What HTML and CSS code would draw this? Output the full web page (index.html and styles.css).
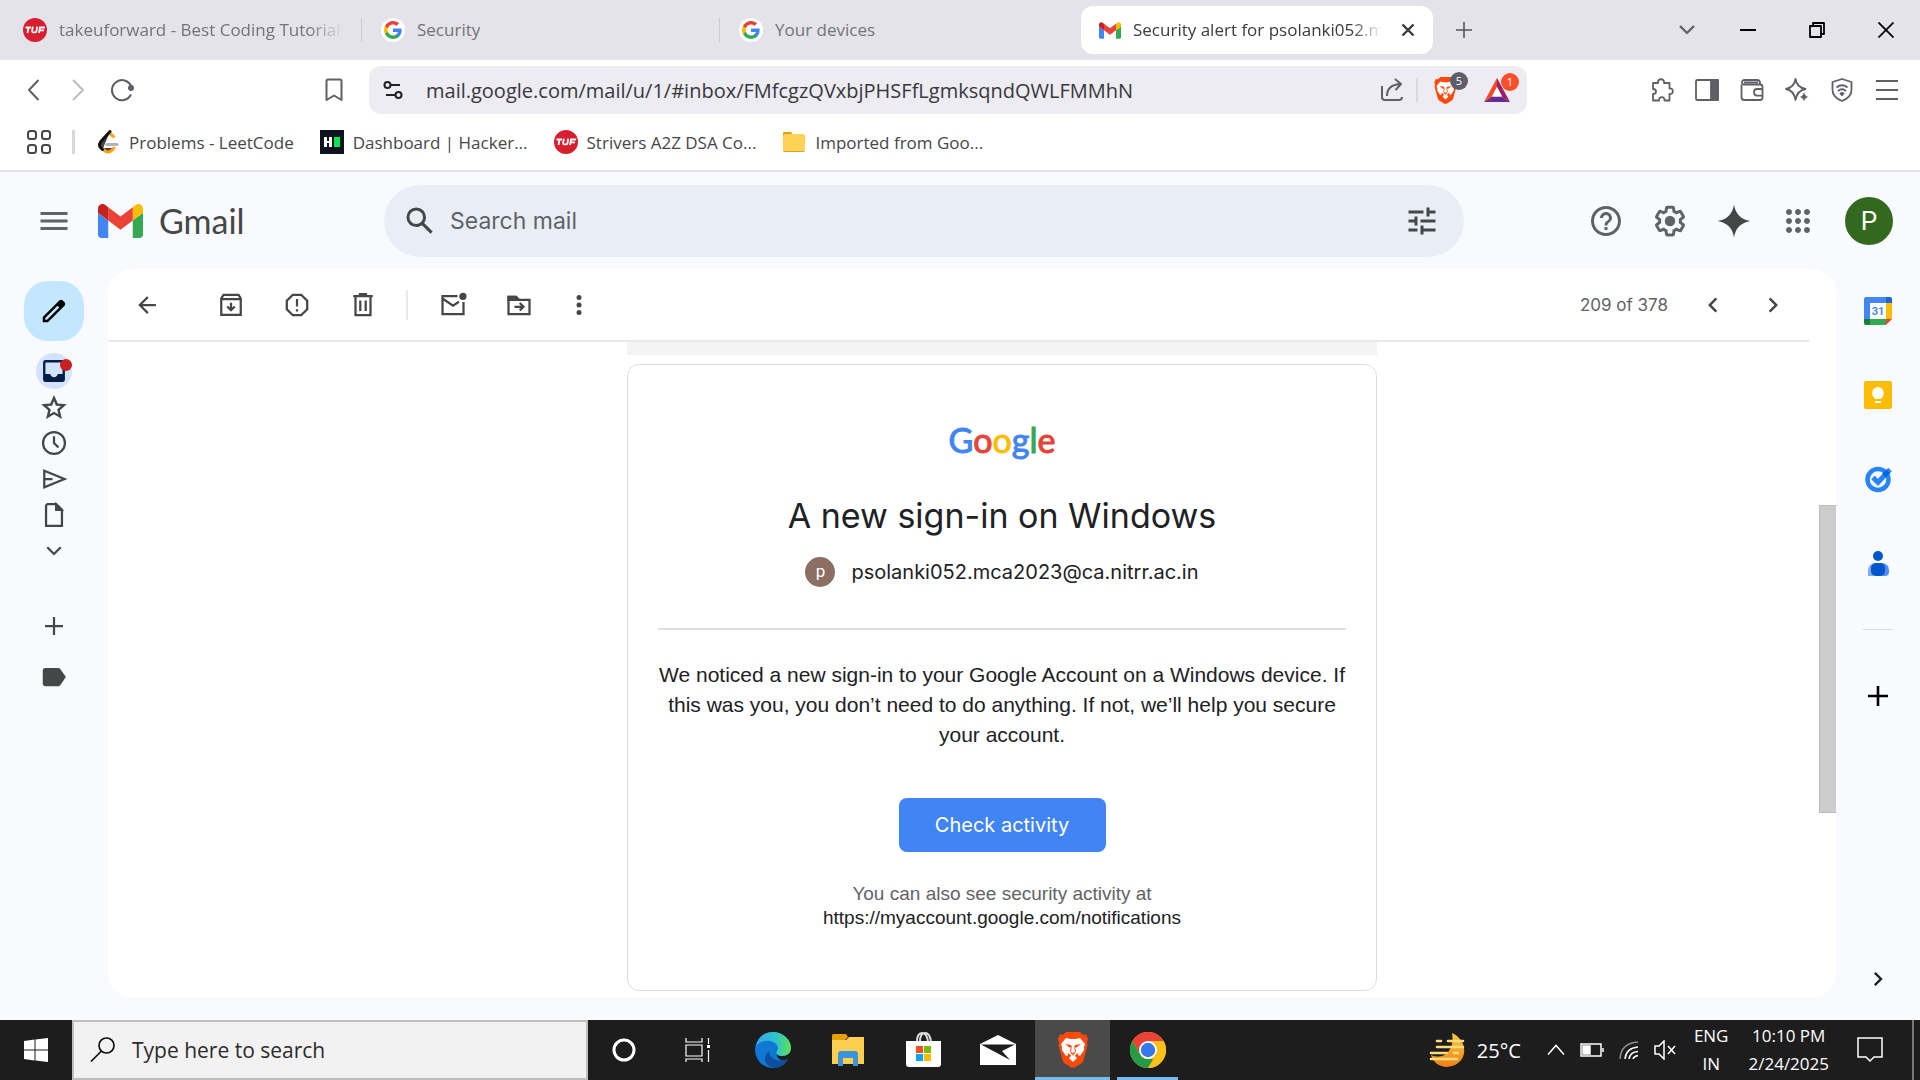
FILE: index.html
```html
<!DOCTYPE html>
<html lang="en">
<head>
<meta charset="utf-8">
<title>Security alert - Gmail</title>
<link rel="stylesheet" href="styles.css">
</head>
<body>
<svg class="defs" aria-hidden="true">
  <defs>
    <symbol id="g" viewBox="0 0 24 24"><circle cx="12" cy="12" r="12" fill="#fff"/><g transform="translate(3 3) scale(.75)"><path fill="#4285f4" d="M23.5 12.3c0-.8-.1-1.6-.2-2.3H12v4.5h6.500c-.3 1.500-1.100 2.700-2.400 3.600v3h3.900c2.200-2.100 3.500-5.200 3.500-8.800z"/><path fill="#34a853" d="M12 24c3.200 0 6-1.100 8-2.900l-3.900-3c-1.100.7-2.400 1.200-4.100 1.200-3.100 0-5.800-2.100-6.700-5H1.300v3.100C3.300 21.300 7.300 24 12 24z"/><path fill="#fbbc05" d="M5.300 14.300c-.2-.7-.4-1.500-.4-2.300s.1-1.600.4-2.300V6.600h-4C.5 8.200 0 10 0 12s.5 3.800 1.300 5.400z"/><path fill="#ea4335" d="M12 4.800c1.800 0 3.300.6 4.600 1.800L20 3.100C18 1.200 15.200 0 12 0 7.300 0 3.300 2.700 1.300 6.600l4 3.100c.9-2.900 3.600-4.900 6.700-4.900z"/></g></symbol>
    <symbol id="gm" viewBox="52 42 88 66"><path fill="#4285f4" d="M58 108h14V74L52 59v43c0 3.320 2.690 6 6 6"/><path fill="#34a853" d="M120 108h14c3.320 0 6-2.690 6-6V59l-20 15"/><path fill="#fbbc04" d="M120 48v26l20-15v-8c0-7.420-8.470-11.650-14.400-7.200"/><path fill="#ea4335" d="M72 74V48l24 18 24-18v26L96 92"/><path fill="#c5221f" d="M52 51v8l20 15V48l-5.600-4.200c-5.940-4.450-14.400-.22-14.400 7.200"/></symbol>
    <symbol id="brave" viewBox="0 0 30 36"><path fill="#fb4a0c" d="M8 0h14l3 3 3-.5L30 7l-1 3 .5 3-4 15c-.5 2-1.500 3-3 4l-6 3.500h-3L7.500 32c-1.500-1-2.500-2-3-4L.5 13 1 10 0 7l2-4.500L5 3z"/><path fill="#fff" d="M8 6l4 1h6l4-1 5 6-1 3 0 3-4 6-4-2-1 2 2 2-4 4-4-4 2-2-1-2-4 2-4-6 0-3-1-3z"/><path fill="#fb4a0c" d="M7 12l6 1 .8 2-.8 5 2 1 2-1-.8-5 .8-2 6-1-4.500 3.500h-1.500l1 3.500-1 2.500-1.500 1-.5 2-.5-2-1.500-1-1-2.500 1-3.500h-1.500zM9 21l3 1-1 1.500zM21 21l-3 1 1 1.500z"/></symbol>
    <symbol id="tuf" viewBox="0 0 24 24"><circle cx="12" cy="12" r="12" fill="#d71f30"/><g fill="none" stroke="#fff" stroke-width="1.800"><path d="M2.500 9.500h5.500M5.500 9.500l-1 5.500M9.800 8.600l-.7 4.500q0 1.200 1 1.200h2q1.200 0 1.400-1.200l.6-4.500M16 15l1-5.500h5M16.500 12.300h4.500"/></g></symbol>
    <symbol id="puzzle" viewBox="0 0 24 24"><path d="M3 5h5c-1-5 7-5 6 0h5.500v5.500c4.500-.5 4.500 6 0 5.500v6.500H14.500c.5-4.500-6-4.500-5.500 0H3V16c4 0 4-5 0-5z"/></symbol>
  </defs>
</svg>

<div class="tabstrip">
  <button class="tab"><svg class="fav"><use href="#tuf"/></svg><span class="fade">takeuforward - Best Coding Tutorials</span></button>
  <button class="tab"><svg class="fav"><use href="#g"/></svg><span>Security</span></button>
  <button class="tab plain"><svg class="fav"><use href="#g"/></svg><span>Your devices</span></button>
  <div class="tab active"><svg class="fav gm"><use href="#gm"/></svg><span class="fade">Security alert for psolanki052.mca2023</span><button class="x" aria-label="Close tab"><svg class="line" width="14" height="14" viewBox="0 0 14 14"><path d="M1.500 1.500l11 11M12.500 1.500l-11 11" stroke-width="2.400"/></svg></button></div>
  <button class="newtab" aria-label="New tab"><svg class="line" width="16" height="16" viewBox="0 0 16 16"><path d="M8 0v16M0 8h16" stroke-width="1.600"/></svg></button>
  <div class="wincontrols">
    <button class="search-tabs" aria-label="Search tabs"><svg class="line" width="16" height="10" viewBox="0 0 16 10"><path d="M1 1l7 7 7-7" stroke-width="2.400"/></svg></button>
    <button aria-label="Minimize"><svg class="line" width="16" height="16" viewBox="0 0 16 16"><path d="M0 8h16" stroke-width="2"/></svg></button>
    <button aria-label="Restore"><svg class="line" width="16" height="16" viewBox="0 0 16 16"><path d="M1 4h11v11H1zM4 4V1h11v11h-3" stroke-width="1.800"/></svg></button>
    <button aria-label="Close window"><svg class="line" width="16" height="16" viewBox="0 0 16 16"><path d="M.5.5l15 15M15.500.5l-15 15" stroke-width="1.800"/></svg></button>
  </div>
</div>

<div class="browserbar">
  <div class="nav">
    <button aria-label="Back"><svg class="line" width="24" height="24" viewBox="0 0 24 24"><path d="M16.500 2L7 12l9.500 10"/></svg></button>
    <button class="dim" aria-label="Forward"><svg class="line" width="24" height="24" viewBox="0 0 24 24"><path d="M7 2l10 10L7 22"/></svg></button>
    <button aria-label="Reload"><svg class="line" width="24" height="24" viewBox="0 0 24 24"><path d="M21 16.500A10 10 0 1 1 21.500 9"/><circle cx="21" cy="10" r="2" class="solid"/></svg></button>
    <button class="mark" aria-label="Bookmark"><svg class="line" width="24" height="24" viewBox="0 0 24 24"><path d="M4.500 3Q4.500 1.500 6 1.500h12q1.500 0 1.500 1.500v19L12 17.500 4.500 22z"/></svg></button>
  </div>
  <div class="address">
    <svg class="line dark" width="20" height="20" viewBox="0 0 20 20"><circle cx="4.500" cy="5" r="3"/><path d="M8 5h9M3 15h9"/><circle cx="15.500" cy="15" r="3"/></svg>
    <input type="text" aria-label="Address" value="mail.google.com/mail/u/1/#inbox/FMfcgzQVxbjPHSFfLgmksqndQWLFMMhN">
    <button aria-label="Share"><svg class="line" width="24" height="24" viewBox="0 0 24 24"><path d="M2 8v11q0 3 3 3h14q3 0 3-3M7 18q0-11 13-12M15 1l6 5-5.500 6"/></svg></button>
    <i class="vsep"></i>
    <button class="badged" aria-label="Brave Shields"><svg width="23" height="27"><use href="#brave"/></svg><b>5</b></button>
    <button class="badged red" aria-label="Brave Rewards"><svg width="26" height="24" viewBox="0 0 26 24"><path fill="#ff4724" d="M13 0L0 24l8-5.500L13 9z"/><path fill="#9e1f63" d="M13 0v9l5 9.500 8 5.500z"/><path fill="#662d91" d="M0 24l8-5.500h10l8 5.500z"/><path fill="#fff" d="M13 9l5 9.500H8z"/></svg><b>1</b></button>
  </div>
  <div class="exts">
    <button aria-label="Extensions"><svg class="line"><use href="#puzzle"/></svg></button>
    <button aria-label="Sidebar"><svg class="line" viewBox="0 0 24 24"><rect x="1" y="2" width="22" height="20" rx="1.500"/><path class="solid" d="M16 2h7v20h-7z"/></svg></button>
    <button aria-label="Wallet"><svg class="line" viewBox="0 0 24 24"><path d="M1.500 6.500V19q0 3 3 3H20q2.500 0 2.500-2.500V9q0-2.500-2.500-2.500H3.500Q1 5 2.500 3q.8-1 2-1H17q3 0 3 3v1.500M22.500 11H17q-3 0-3 3.300t3 3.300h5.500M4 4.300h14"/></svg></button>
    <button aria-label="Leo"><svg class="line" viewBox="0 0 24 24"><path d="M10.500 1q1.200 8.300 10 10-8.800 1.700-10 11-1.200-9.300-9.500-11Q9.300 9.300 10.500 1z"/><path class="solid knock" d="M19 14q.8 4.200 4.500 5-3.700.8-4.500 4.500-.8-3.700-4.500-4.500 3.700-.8 4.500-5z"/></svg></button>
    <button aria-label="VPN"><svg class="line" viewBox="0 0 24 24"><path d="M12 1l9.500 3v8q0 7-9.500 11Q2.500 19 2.500 12V4zM6.500 9.500q5.500-4.500 11 0M8 13q4-3.500 8 0"/><path class="solid" d="M10.500 15.500q1.500-1 3 0L12 17z"/></svg></button>
    <button aria-label="Menu"><svg class="line" viewBox="0 0 24 24"><path d="M1 3h22M1 12h22M1 21h22"/></svg></button>
  </div>
</div>

<nav class="bookmarks">
  <button aria-label="Apps"><svg class="line" viewBox="0 0 24 24"><rect x="1" y="1" width="8" height="8" rx="2.500"/><rect x="15" y="1" width="8" height="8" rx="2.500"/><rect x="1" y="15" width="8" height="8" rx="2.500"/><rect x="15" y="15" width="8" height="8" rx="2.500"/></svg></button>
  <i class="vsep"></i>
  <a href="#"><svg viewBox="0 0 24 24" fill="none" stroke-width="3" stroke-linecap="round"><path stroke="#ffa116" d="M17.500 6.500L14 3.500M18 18l-3 3q-3 2-6 0l-3-3"/><path stroke="#b3b3b3" d="M11 14.500h10"/><path stroke="#111" d="M14 1.500L4.500 12q-2 3 0 5.500l2 2"/></svg>Problems - LeetCode</a>
  <a href="#"><svg viewBox="0 0 24 24"><path fill="#0e141e" d="M0 0h24v24H0z"/><path fill="#fff" d="M4 7h3v4h2V7h3v10H9v-4H7v4H4z"/><path fill="#00e550" d="M14 7h6v10h-6z"/></svg>Dashboard | Hacker...</a>
  <a href="#"><svg><use href="#tuf"/></svg>Strivers A2Z DSA Co...</a>
  <a href="#"><svg viewBox="0 0 24 24"><path fill="#e0a015" d="M1 3q0-1 1-1h7l2 3v5H1z"/><rect x="1" y="4" width="22" height="17" rx="2" fill="#fed355"/><path fill="#d5a02b" d="M1 19q0 2 2 2h18q2 0 2-2v1q0 2-2 2H3q-2 0-2-2z"/></svg>Imported from Goo...</a>
</nav>

<div class="gmail">
  <header class="ghead">
    <div class="brand">
      <button class="ico" aria-label="Main menu"><svg width="36" height="36" viewBox="0 0 24 24"><path d="M3 18h18v-2H3v2zm0-5h18v-2H3v2zm0-7v2h18V6H3z"/></svg></button>
      <a href="#"><svg width="45" height="34"><use href="#gm"/></svg><span>Gmail</span></a>
    </div>
    <form class="search">
      <button type="button" class="ico" aria-label="Search"><svg width="36" height="36" viewBox="0 0 24 24"><path d="M20.490 19l-5.730-5.730C15.530 12.200 16 10.910 16 9.500A6.500 6.500 0 1 0 9.500 16c1.410 0 2.700-.47 3.770-1.240L19 20.490 20.490 19zM5 9.500C5 7.010 7.010 5 9.500 5S14 7.010 14 9.500 11.990 14 9.500 14 5 11.990 5 9.500z"/></svg></button>
      <input type="text" placeholder="Search mail" aria-label="Search mail">
      <button type="button" class="ico" aria-label="Search options"><svg width="36" height="36" viewBox="0 0 24 24"><path d="M3 17v2h6v-2H3zM3 5v2h10V5H3zm10 16v-2h8v-2h-8v-2h-2v6h2zM7 9v2H3v2h4v2h2V9H7zm14 4v-2H11v2h10zm-6-4h2V7h4V5h-4V3h-2v6z"/></svg></button>
    </form>
    <div class="account">
      <button class="ico" aria-label="Support"><svg width="36" height="36" viewBox="0 0 24 24"><path d="M11 18h2v-2h-2v2zm1-16C6.480 2 2 6.480 2 12s4.480 10 10 10 10-4.480 10-10S17.520 2 12 2zm0 18c-4.410 0-8-3.590-8-8s3.590-8 8-8 8 3.590 8 8-3.590 8-8 8zm0-14c-2.210 0-4 1.790-4 4h2c0-1.100.9-2 2-2s2 .9 2 2c0 2-3 1.750-3 5h2c0-2.250 3-2.500 3-5 0-2.210-1.790-4-4-4z"/></svg></button>
      <button class="ico" aria-label="Settings"><svg width="36" height="36" viewBox="0 0 24 24"><path d="M13.850 22.250h-3.700c-.74 0-1.360-.54-1.450-1.270l-.27-1.890c-.27-.14-.53-.29-.79-.46l-1.800.72c-.7.26-1.470-.03-1.810-.65L2.200 15.530c-.35-.66-.2-1.440.36-1.880l1.530-1.190c-.01-.15-.02-.3-.02-.46 0-.15.01-.31.02-.46l-1.520-1.190c-.59-.45-.74-1.260-.37-1.880l1.850-3.190c.34-.62 1.110-.9 1.790-.63l1.810.73c.26-.17.52-.32.78-.46l.27-1.910c.09-.7.710-1.250 1.440-1.250h3.700c.74 0 1.360.54 1.450 1.270l.27 1.890c.27.14.53.29.79.46l1.800-.72c.71-.26 1.480.03 1.820.65l1.840 3.180c.36.66.2 1.440-.36 1.880l-1.520 1.190c.01.15.02.3.02.46s-.01.31-.02.46l1.520 1.190c.56.45.72 1.230.37 1.860l-1.860 3.220c-.34.62-1.110.9-1.800.63l-1.800-.72c-.26.17-.52.32-.78.46l-.27 1.910c-.1.68-.72 1.220-1.460 1.220zm-3.230-2h2.760l.37-2.550.53-.22c.44-.18.88-.44 1.340-.78l.45-.34 2.380.96 1.380-2.400-2.030-1.580.07-.56c.03-.26.06-.51.06-.78s-.03-.53-.06-.78l-.07-.56 2.030-1.580-1.390-2.400-2.390.96-.45-.35c-.42-.32-.87-.58-1.330-.77l-.52-.22-.37-2.550h-2.760l-.37 2.550-.53.21c-.44.19-.88.44-1.340.79l-.45.33-2.380-.95-1.390 2.390 2.030 1.580-.07.560a7 7 0 0 0-.06.79c0 .26.02.53.06.78l.07.56-2.030 1.580 1.380 2.400 2.390-.96.45.35c.43.33.86.58 1.330.77l.53.22.38 2.550z"/><circle cx="12" cy="12" r="3.500"/></svg></button>
      <button class="ico gemini" aria-label="Gemini"><svg width="36" height="36" viewBox="0 0 24 24"><path d="M12 1q1.500 9.500 11 11-9.500 1.500-11 11-1.500-9.500-11-11 9.500-1.500 11-11z"/></svg></button>
      <button class="ico" aria-label="Google apps"><svg width="36" height="36" viewBox="0 0 24 24"><path d="M6,8c1.100,0 2,-0.900 2,-2s-0.900,-2 -2,-2 -2,0.900 -2,2 0.900,2 2,2zM12,20c1.100,0 2,-0.900 2,-2s-0.900,-2 -2,-2 -2,0.900 -2,2 0.900,2 2,2zM6,20c1.100,0 2,-0.900 2,-2s-0.900,-2 -2,-2 -2,0.900 -2,2 0.900,2 2,2zM6,14c1.100,0 2,-0.900 2,-2s-0.900,-2 -2,-2 -2,0.900 -2,2 0.900,2 2,2zM12,14c1.100,0 2,-0.900 2,-2s-0.900,-2 -2,-2 -2,0.900 -2,2 0.900,2 2,2zM16,6c0,1.100 0.900,2 2,2s2,-0.900 2,-2 -0.900,-2 -2,-2 -2,0.900 -2,2zM12,8c1.100,0 2,-0.900 2,-2s-0.900,-2 -2,-2 -2,0.900 -2,2 0.900,2 2,2zM18,14c1.100,0 2,-0.900 2,-2s-0.900,-2 -2,-2 -2,0.900 -2,2 0.900,2 2,2zM18,20c1.100,0 2,-0.900 2,-2s-0.900,-2 -2,-2 -2,0.900 -2,2 0.900,2 2,2z"/></svg></button>
      <button class="avatar" aria-label="Account">P</button>
    </div>
  </header>

  <div class="gbody">
    <nav class="rail">
      <button class="compose" aria-label="Compose"><svg width="36" height="36" viewBox="0 0 24 24"><path d="M20.410 4.940l-1.350-1.350c-.78-.78-2.050-.78-2.830 0L3 16.820V21h4.180L20.410 7.770c.79-.78.79-2.050 0-2.830zM6.410 19.060L5 19v-1.360l9.820-9.820 1.410 1.410-9.820 9.830z"/></svg></button>
      <a href="#" class="inbox" aria-label="Inbox"><svg viewBox="0 0 20 20"><path d="M4.500 3h11c.83 0 1.500.67 1.500 1.500v11c0 .83-.67 1.500-1.500 1.500h-11c-.83 0-1.500-.67-1.500-1.500v-11C3 3.670 3.670 3 4.500 3zm0 1.500V12H7.500c.4 1.200 1.300 2 2.500 2s2.100-.8 2.500-2h3V4.500h-11z" transform="translate(-2 -2) scale(1.200)"/></svg><i></i></a>
      <a href="#" aria-label="Starred"><svg viewBox="0 -1 20 20"><path d="M7.100 13.900l2.900-1.800 2.900 1.800-.8-3.300 2.600-2.200-3.400-.3L10 5l-1.300 3.100-3.400.3 2.600 2.200-.8 3.300zM4.700 17l1.400-5.900L1.500 7.100l6-.5L10 1l2.500 5.600 6 .5-4.600 4L15.300 17 10 13.900z"/></svg></a>
      <a href="#" aria-label="Snoozed"><svg class="stroke" viewBox="0 0 20 20"><circle cx="10" cy="10" r="7.300"/><path d="M10 5.500V10l3 3"/></svg></a>
      <a href="#" aria-label="Sent"><svg class="stroke" viewBox="0 0 20 20"><path d="M3.500 4.500L17 10 3.500 15.500zM4 10h5"/></svg></a>
      <a href="#" aria-label="Drafts"><svg class="stroke" viewBox="0 0 20 20"><path d="M5.700 2.700h5.800l3.800 3.800v10.800H4.700V3.700zM11.500 3v3.500H15"/><path class="solid" d="M11.500 3v3.500H15z"/></svg></a>
      <a href="#" aria-label="More"><svg class="stroke" viewBox="0 0 20 20"><path d="M5.500 7.500L10 12l4.500-4.500"/></svg></a>
      <button class="add" aria-label="Create label"><svg class="stroke" viewBox="0 0 20 20"><path d="M10 4v12M4 10h12"/></svg></button>
      <a href="#" class="label" aria-label="Labels"><svg viewBox="0 0 24 24"><path d="M17 5.500c-.4-.5-1-.8-1.600-.8H5A2 2 0 0 0 3 6.700v10.600c0 1.100.9 2 2 2h10.400c.6 0 1.200-.3 1.600-.8L21.500 12z"/></svg></a>
    </nav>

    <main class="pane">
      <div class="tools">
        <button class="back" aria-label="Back to inbox"><svg viewBox="0 0 24 24"><path d="M20 11H7.830l5.590-5.590L12 4l-8 8 8 8 1.410-1.410L7.830 13H20v-2z" transform="translate(1.500 1.500) scale(.88)"/></svg></button>
        <button aria-label="Archive"><svg class="stroke" viewBox="0 0 20 20"><path d="M3.500 5.500v11h13v-11L15 3.300H5zM3.500 6h13M10 8.500V13M7.500 11l2.500 2.500 2.500-2.500"/></svg></button>
        <button aria-label="Report spam"><svg class="stroke" viewBox="0 0 20 20"><path d="M7.200 3.200h5.600l4 4v5.600l-4 4H7.200l-4-4V7.200zM10 6v5M10 12.800v1.500"/></svg></button>
        <button aria-label="Delete"><svg class="stroke" viewBox="0 0 20 20"><path d="M3.500 4h13M8 4V2.800h4V4M5 4v12.700h10V4M8.200 7v7M11.800 7v7"/></svg></button>
        <i class="vsep"></i>
        <button aria-label="Mark as unread"><svg class="stroke" viewBox="0 0 20 20"><path d="M13 4H3v12h14V8M3.500 6l6.500 4.500 4-2.700"/><circle class="solid" cx="16.600" cy="4.200" r="1.700"/></svg></button>
        <button aria-label="Move to"><svg class="stroke" viewBox="0 0 20 20"><path d="M3 4.500V16h14V6.500H9.800L8 4.500zM7 11.200h5.500M10.500 8.700l2.500 2.500-2.500 2.500"/><path class="solid" d="M3 4.500h5l2 2H3z"/></svg></button>
        <button class="more" aria-label="More"><svg viewBox="0 0 24 24"><circle cx="12" cy="6" r="2"/><circle cx="12" cy="12" r="2"/><circle cx="12" cy="18" r="2"/></svg></button>
        <span class="count">209 of 378</span>
        <button class="page" aria-label="Newer"><svg viewBox="0 0 24 24"><path d="M15.400 7.400L14 6l-6 6 6 6 1.400-1.400L10.800 12z"/></svg></button>
        <button class="page" aria-label="Older"><svg viewBox="0 0 24 24"><path d="M10 6L8.600 7.400l4.600 4.600-4.600 4.600L10 18l6-6z"/></svg></button>
      </div>
      <div class="thread">
        <div class="strip"></div>
        <article class="card">
          <div class="glogo" aria-label="Google"><span class="b">G</span><span class="r">o</span><span class="y">o</span><span class="b">g</span><span class="n">l</span><span class="r">e</span></div>
          <h1>A new sign-in on Windows</h1>
          <div class="who"><span>p</span>psolanki052.mca2023@ca.nitrr.ac.in</div>
          <p>We noticed a new sign-in to your Google Account on a Windows device. If this was you, you don’t need to do anything. If not, we’ll help you secure your account.</p>
          <a href="#" class="check">Check activity</a>
          <div class="also">You can also see security activity at<br><a href="#">https://myaccount.google.com/notifications</a></div>
        </article>
        <div class="thumb"></div>
      </div>
    </main>

    <aside class="side">
      <button aria-label="Calendar"><svg viewBox="0 0 28 28"><path fill="#4285f4" d="M2 0h20v6H6v16H0V2q0-2 2-2z"/><path fill="#1967d2" d="M22 0h4q2 0 2 2v4h-6z"/><path fill="#fff" d="M6 6h16v16H6z"/><path fill="#fbbc04" d="M22 6h6v16h-6z"/><path fill="#34a853" d="M6 22h16v6H6z"/><path fill="#188038" d="M0 22h6v6H2q-2 0-2-2z"/><path fill="#ea4335" d="M22 22h6l-6 6z"/><text x="14" y="18" text-anchor="middle" class="day">31</text></svg></button>
      <button aria-label="Keep"><svg viewBox="0 0 28 28"><rect width="28" height="28" rx="2" fill="#fbbc04"/><path fill="#fff" d="M11 17.500C6.500 15 7.500 6 14 6s7.500 9 3 11.500V18h-6zM11 20h6v2h-6z"/></svg></button>
      <button aria-label="Tasks"><svg viewBox="0 0 28 28"><circle cx="14" cy="14.500" r="10.500" fill="none" stroke="#2684fc" stroke-width="4.500"/><path fill="none" stroke="#2684fc" stroke-width="5" d="M9 12.500l5 5L26 4.500"/><path stroke="#0066da" stroke-width="5" d="M20 10.500l4-4"/></svg></button>
      <button aria-label="Contacts"><svg viewBox="0 0 28 28"><circle cx="14" cy="7" r="5" fill="#0057cc"/><path fill="#7baaf7" d="M4 27v-5q0-7 7-8h6l-2 13z"/><path fill="#4f8df5" d="M11 14h7q7 1 7 7v2q0 4-4 4H11z"/><rect x="7" y="14" width="14" height="13" rx="5" fill="#0057cc"/></svg></button>
      <hr>
      <button class="plus" aria-label="Get add-ons"><svg viewBox="0 0 28 28"><path stroke="#000" stroke-width="2.600" d="M14 4v20M4 14h20"/></svg></button>
      <button class="hide" aria-label="Hide side panel"><svg viewBox="0 0 24 24"><path d="M10 6L8.600 7.400l4.600 4.600-4.600 4.600L10 18l6-6z"/></svg></button>
    </aside>
  </div>
</div>

<footer class="taskbar">
  <button class="start" aria-label="Start"><svg width="24" height="24" viewBox="0 0 24 24"><path fill="#fff" d="M0 3l10.500-1.400v10H0zM11.500 1.400L24 0v11.500H11.500zM0 12.500h10.500v10L0 21zM11.500 12.500H24V24l-12.500-1.500z"/></svg></button>
  <label class="find"><svg width="26" height="26" viewBox="0 0 26 26"><circle cx="16.500" cy="8.500" r="7.500" fill="none" stroke="#111" stroke-width="1.700"/><path stroke="#111" stroke-width="1.700" d="M11.500 14L1 24.500"/></svg><input type="text" placeholder="Type here to search" aria-label="Type here to search"></label>
  <button class="app cortana" aria-label="Cortana"><svg width="26" height="26" viewBox="0 0 26 26"><circle cx="13" cy="13" r="10" fill="none" stroke="#fff" stroke-width="3"/></svg></button>
  <button class="app" aria-label="Task view"><svg width="26" height="26" viewBox="0 0 26 26"><path fill="none" stroke="#fff" stroke-width="1.200" d="M1 1v4h16V1M1 8h16v11H1zM1 25v-3h16v3M23.500 1v6M23.500 13v12"/><path fill="#fff" d="M22 8h3v3h-3z"/></svg></button>
  <button class="app" aria-label="Edge"><svg width="36" height="36" viewBox="0 0 36 36"><defs><linearGradient id="e1" x1="0" x2="1"><stop offset="0" stop-color="#35a7ee"/><stop offset=".6" stop-color="#2fc5c6"/><stop offset="1" stop-color="#63e04d"/></linearGradient></defs><path fill="#0f78d4" d="M0 17C1 7 8 0 18 0s18 7 18 16c0 5-4 8-9 8s-7-3-5-5c-2 8 5 11 11 8-3 6-9 9-15 9C8 36 0 28 0 17z"/><path fill="#0d4f9e" d="M14 19c0 7 8 12 19 8-3 6-9 9-14 9-8-1-13-10-5-17z"/><path fill="url(#e1)" d="M1 14C3 5 9 0 18 0s18 7 18 16c0 5-4 8-9 8s-7-3-5-5c3-4-1-9-7-10C9 8 4 10 1 14z"/></svg></button>
  <button class="app" aria-label="File Explorer"><svg width="32" height="32" viewBox="0 0 32 32"><path fill="#e3a008" d="M0 1.500Q0 0 1.500 0H14l2 3-3 3H0z"/><path fill="#fdcf4e" d="M0 6h14l3-3h15v27H0z"/><path fill="#3a93dc" d="M6 32V20q0-3 3-3h14q3 0 3 3v12h-5v-8H11v8z"/></svg></button>
  <button class="app" aria-label="Microsoft Store"><svg width="36" height="36" viewBox="0 0 36 36"><path fill="none" stroke="#ddd" stroke-width="2" d="M12 10q0-9 5-9t6 9M15 10q0-9 5-9t6 9"/><path fill="#fff" d="M1 9h35v23q0 3-3 3H4q-3 0-3-3z"/><path fill="#f25022" d="M11 14h7v7h-7z"/><path fill="#7fba00" d="M19 14h7v7h-7z"/><path fill="#00a4ef" d="M11 22h7v7h-7z"/><path fill="#ffb900" d="M19 22h7v7h-7z"/></svg></button>
  <button class="app" aria-label="Mail"><svg width="36" height="30" viewBox="0 0 36 30"><path fill="#fff" d="M0 9L18 0l18 9v21H0z"/><path fill="#1d1d1d" d="M1 9.500h34l-13 6.500 8 9z"/></svg></button>
  <button class="app on" aria-label="Brave"><svg width="30" height="36"><use href="#brave"/></svg></button>
  <button class="app run" aria-label="Chrome"><svg width="36" height="36" viewBox="0 0 36 36"><circle cx="18" cy="18" r="18" fill="#fbc116"/><path fill="#ea4335" d="M2.400 9A18 18 0 0 1 33.600 9H18l-7.800 13.500z"/><path fill="#269a48" d="M2.400 9l7.800 13.500q3 5 7.800 4.500h7.800L18 36A18 18 0 0 1 2.400 9z"/><path fill="#fbc116" d="M18 9h15.600A18 18 0 0 1 18 36l7.800-13.500z"/><circle cx="18" cy="18" r="9" fill="#fff"/><circle cx="18" cy="18" r="7.200" fill="#3478eb"/></svg></button>
  <div class="tray">
    <svg width="36" height="34" viewBox="0 0 36 34"><defs><linearGradient id="mo" y2="1" x2="0"><stop offset="0" stop-color="#f9c840"/><stop offset="1" stop-color="#f08018"/></linearGradient></defs><path fill="url(#mo)" d="M23 0c18 8 16 33-5 34-8 0-14-5-16-12 14 6 24-6 21-22z"/><path stroke="#fbdc7c" stroke-width="2.600" stroke-linecap="round" d="M8 8h4M19 8h15M8 14h26M2 20h16M25 20h4M2 26h26"/></svg>
    <span class="temp">25°C</span>
    <svg class="line" width="18" height="12" viewBox="0 0 18 12"><path d="M1 10.500L9 1.500l8 9"/></svg>
    <svg class="line" width="24" height="14" viewBox="0 0 24 14"><path d="M1 1h20v12H1zM23 5v4"/><path fill="#fff" d="M3 3h7v8H3z"/></svg>
    <svg class="line" width="20" height="18" viewBox="0 0 20 18"><path opacity=".5" d="M1 18Q2 2 19 1"/><path d="M6 18Q7 7 19 6M10 18q1-7 9-7.500M14 18q1-3 5-3.500"/></svg>
    <svg class="line" width="22" height="20" viewBox="0 0 22 20"><path d="M1 6h4l5-5v18l-5-5H1zM14 6l7 8M21 6l-7 8"/></svg>
    <span class="two lang">ENG<br>IN</span>
    <span class="two clock">10:10 PM<br>2/24/2025</span>
    <svg class="line" width="26" height="26" viewBox="0 0 26 26"><path d="M1 1h24v19h-8l-4 4-4-4H1z"/></svg>
  </div>
</footer>
</body>
</html>
```
FILE: styles.css
```css
* { box-sizing: border-box; }
body {
  margin: 0;
  min-height: 100vh;
  display: flex;
  flex-direction: column;
  font-family: "Open Sans", "Noto Sans", sans-serif;
  font-size: 17px;
  color: #3b3b40;
  background: #fff;
}
.defs { position: absolute; width: 0; height: 0; }
button { border: 0; padding: 0; background: none; font: inherit; color: inherit; display: flex; align-items: center; justify-content: center; }
a { color: inherit; text-decoration: none; }
svg { display: block; flex: none; fill: currentColor; }
input { border: 0; background: none; padding: 0; min-width: 0; flex: 1; font: inherit; color: inherit; outline: 0; }
.line { fill: none; stroke: currentColor; stroke-width: 2; stroke-linejoin: round; }
.stroke { fill: none; stroke: currentColor; stroke-width: 1.5; }
.line .solid, .stroke .solid { fill: currentColor; }
.vsep { width: 2px; height: 24px; background: #d9d8de; flex: none; }

/* tab strip */
.tabstrip { height: 60px; background: #e4e3e9; display: flex; align-items: center; padding-left: 4px; }
.tab { flex: 0 1 358px; height: 24px; padding: 0 18px 0 19px; gap: 12px; justify-content: flex-start; border-right: 1px solid #cbcad0; color: #73737a; white-space: nowrap; min-width: 0; font-size: 17px; }
.tab.plain { border-color: transparent; }
.tab.active { display: flex; align-items: center; height: 48px; flex-basis: 352px; margin: 0 3px; padding-left: 18px; background: #fff; border: 0; border-radius: 12px; color: #3b3b40; }
.tab span { overflow: hidden; min-width: 0; line-height: 24px; }
.fade { flex: 1; -webkit-mask-image: linear-gradient(90deg, #000 88%, transparent); mask-image: linear-gradient(90deg, #000 88%, transparent); }
.fav { width: 24px; height: 24px; }
.fav.gm { width: 22px; height: 17px; }
.x { width: 14px; margin-left: 7px; }
.newtab { width: 56px; height: 48px; color: #55555b; }
.wincontrols { margin-left: auto; display: flex; height: 60px; color: #000; }
.wincontrols button { width: 69px; }
.wincontrols .search-tabs { width: 52px; color: #62626a; }

/* navigation row */
.browserbar { display: flex; align-items: center; height: 60px; color: #5f5f66; }
.nav { width: 369px; display: flex; padding-left: 12px; }
.nav button { width: 44px; }
.nav .dim { color: #bdbdc2; }
.nav .mark { margin-left: auto; width: 70px; }
.address { flex: 1; min-width: 0; height: 48px; border-radius: 12px; background: #edecf2; display: flex; align-items: center; padding: 0 8px 0 14px; font-size: 20px; }
.address input { margin-left: 23px; color: #38383e; }
.address .dark { color: #222; }
.address .vsep { margin: 0 16px 0 12px; }
.badged { position: relative; width: 34px; justify-content: flex-start; }
.badged.red { width: 35px; margin-left: 16px; }
.badged b { position: absolute; right: 0; top: -5px; width: 18px; height: 18px; border-radius: 9px; background: #5e5e6b; color: #fff; font-size: 11px; line-height: 18px; font-weight: 400; }
.badged.red b { background: #ff4f28; }
.exts { width: 393px; display: flex; justify-content: flex-end; padding-right: 11px; }
.exts button { width: 45px; }
.exts svg { width: 24px; height: 24px; stroke-width: 1.8; }
.knock { stroke: none; }

.bookmarks { display: flex; align-items: center; height: 52px; padding: 0 27px 6px; border-bottom: 2px solid #e2e4e6; font-size: 17px; color: #46464b; white-space: nowrap; }
.bookmarks svg { width: 24px; height: 24px; }
.bookmarks .vsep { margin: 0 21px; width: 3px; }
.bookmarks a { display: flex; align-items: center; gap: 9px; margin-right: 26px; }

/* mail app */
.gmail { flex: 1; display: flex; flex-direction: column; background: #f8fafe; font-family: Inter, "Open Sans", sans-serif; color: #444746; }
.ghead { height: 97px; display: flex; align-items: center; }
.brand { width: 384px; flex: none; display: flex; align-items: center; padding-left: 36px; color: #5f6368; }
.brand a { display: flex; align-items: center; gap: 16px; margin-left: 26px; color: #444746; font-family: Lato, sans-serif; font-size: 34px; line-height: 38px; }
.search { flex: 0 1 1080px; height: 72px; margin: 0; border-radius: 36px; background: #e9eef6; display: flex; align-items: center; padding: 0 24px 0 18px; font-size: 23px; }
.search input { margin: 0 12px; }
.search input::placeholder { color: #5f6368; opacity: 1; }
.account { margin-left: auto; display: flex; align-items: center; padding-right: 27px; color: #5f6368; }
.account .ico { width: 64px; }
.account .gemini { color: #444746; }
.avatar { width: 48px; height: 48px; margin-left: 15px; border-radius: 50%; background: #33691e; color: #fff; font-size: 26px; line-height: 48px; font-family: Roboto, sans-serif; }
.gbody { flex: 1; display: grid; grid-template-columns: 108px 1fr 84px; padding-bottom: 23px; }

.rail { display: flex; flex-direction: column; align-items: center; padding-top: 12px; }
.rail svg { width: 30px; height: 30px; }
.compose { width: 60px; height: 60px; border-radius: 24px; background: #c2e7ff; color: #000; margin-bottom: 12px; }
.rail .compose svg { width: 30px; height: 30px; }
.rail a { width: 36px; height: 36px; display: flex; align-items: center; justify-content: center; position: relative; }
.rail .inbox { border-radius: 50%; background: #d3e3fd; color: #041e49; }
.inbox i { position: absolute; right: 0; top: 6px; width: 12px; height: 12px; border-radius: 50%; background: #c5221f; }
.rail .inbox svg { width: 26px; height: 26px; }
.add { height: 36px; margin-top: 39px; }
.rail .label { margin-top: 15px; }

.pane { background: #fff; border-radius: 24px; display: flex; flex-direction: column; overflow: hidden; min-width: 0; }
.tools { height: 73px; margin-right: 27px; padding: 0 6px 0 15px; border-bottom: 2px solid #e8e9ea; display: flex; align-items: center; }
.tools button { width: 66px; height: 48px; }
.tools svg { width: 30px; height: 30px; }
.tools .back { width: 48px; margin-right: 27px; }
.tools .vsep { margin: 0 12px 0 10px; height: 30px; background: #e8e9eb; }
.tools .more { width: 54px; }
.tools .page { width: 60px; }
.count { margin: 0 15px 0 auto; font-size: 17px; color: #5f6368; }
.thread { position: relative; flex: 1; padding: 0 27px 0 87px; display: flex; flex-direction: column; align-items: center; }
.strip { width: 750px; height: 13px; background: #f4f4f4; margin-bottom: 9px; }
.card { width: 750px; border: 1px solid #dadce0; border-radius: 12px; padding: 47px 30px 60px; text-align: center; color: #202124; font-family: "Liberation Sans", Arial, sans-serif; }
.thumb { position: absolute; right: 0; top: 163px; width: 17px; height: 308px; background: #ccc; border: 1px solid #bbb; border-right: 0; }
.glogo { font-family: Lato, sans-serif; font-size: 34px; line-height: 56px; -webkit-text-stroke: 1px currentColor; }
.glogo .b { color: #4285f4; }
.glogo .r { color: #ea4335; }
.glogo .y { color: #fbbc05; }
.glogo .n { color: #34a853; }
.card h1 { margin: 20px 0 13px; font: 400 34px/56px Inter, sans-serif; }
.who { display: flex; align-items: center; justify-content: center; gap: 16px; font: 20px/30px Inter, sans-serif; padding-bottom: 41px; border-bottom: 2px solid #dfe0e3; }
.who span { width: 30px; height: 30px; border-radius: 50%; background: #8d6e63; color: #fff; font: 17px/28px Roboto, sans-serif; }
.card p { margin: 30px 0 48px; font-size: 21px; line-height: 30px; }
.check { display: block; width: 207px; margin: 0 auto; border-radius: 8px; background: #4184f3; color: #fff; font: 20px/54px Inter, sans-serif; }
.also { margin-top: 30px; font-size: 19px; line-height: 24px; color: #5f6368; }
.also a { color: #202124; }

.side { display: flex; flex-direction: column; align-items: center; }
.side button { height: 84px; width: 60px; }
.side svg { width: 28px; height: 28px; }
.day { font: 700 11px Roboto, sans-serif; fill: #4285f4; }
.side hr { width: 30px; margin: 24px 0; border: 0; border-top: 1px solid #dadce0; }
.side .hide { margin-top: auto; height: 36px; color: #1f1f1f; }

/* taskbar */
.taskbar { height: 60px; background: #1d1d1d; color: #fff; display: flex; font-size: 18px; }
.start { width: 72px; }
.find { width: 516px; border: 2px solid #bfbfbf; background: #f2f2f2; color: #333; display: flex; align-items: center; padding-left: 16px; gap: 16px; font-size: 21px; }
.find input::placeholder { color: #2b2b2b; opacity: 1; }
.app { width: 75px; border-bottom: 3px solid transparent; padding-top: 3px; }
.app.cortana { width: 72px; }
.app.on { background: #4a4a4a; border-color: #76b9ed; }
.app.run { background: linear-gradient(#76b9ed, #76b9ed) center bottom / 61px 3px no-repeat border-box; }
.tray { margin-left: auto; display: flex; align-items: center; padding-right: 29px; border-right: 2px solid #777; margin-right: 6px; }
.tray .line { stroke-width: 1.5; stroke-linejoin: miter; }
.temp { margin: 0 26px 0 12px; font-size: 20px; }
.tray .line + .line { margin-left: 15px; }
.two { text-align: center; line-height: 28px; font-size: 17px; }
.lang { margin-left: 18px; }
.clock { margin: 0 28px 0 20px; }
```
